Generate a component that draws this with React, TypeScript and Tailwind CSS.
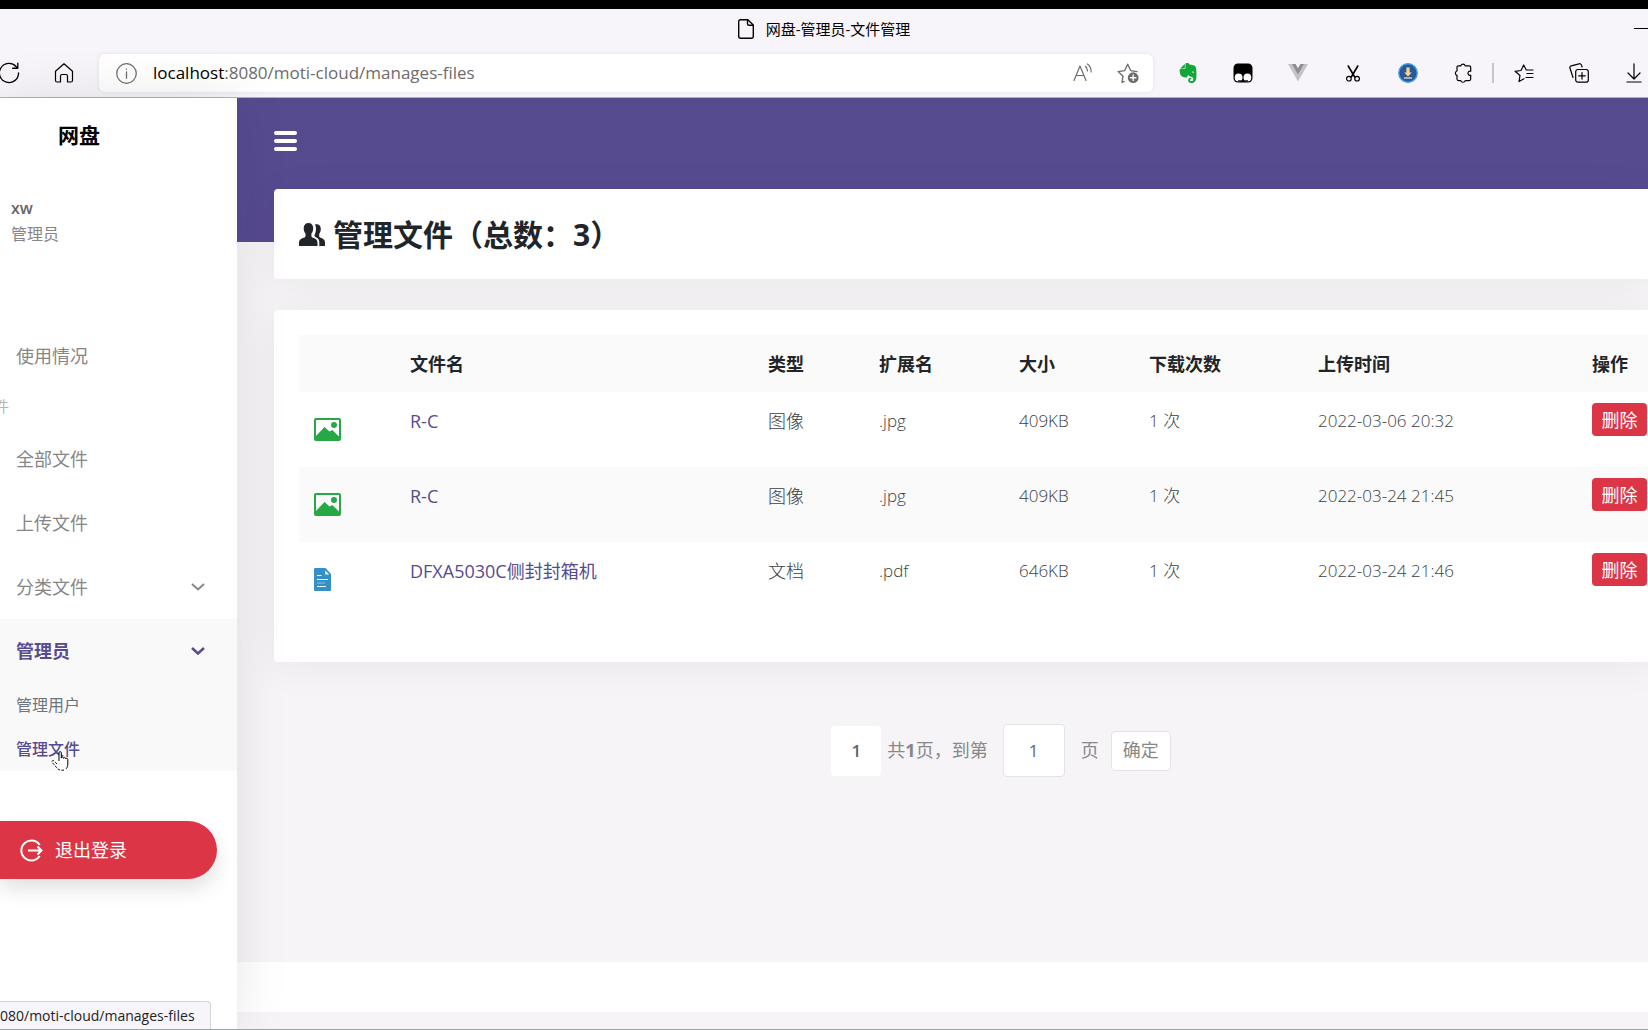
import { memo, useState, type ReactNode } from 'react';
import { SiEvernote } from 'react-icons/si';

type FileKind = 'image' | 'document';

interface CloudFile {
  readonly id: number;
  readonly kind: FileKind;
  readonly name: string;
  readonly type: string;
  readonly extension: string;
  readonly size: string;
  readonly downloads: number;
  readonly uploadedAt: string;
}

const FILES: readonly CloudFile[] = [
  { id: 1, kind: 'image', name: 'R-C', type: '图像', extension: '.jpg', size: '409KB', downloads: 1, uploadedAt: '2022-03-06 20:32' },
  { id: 2, kind: 'image', name: 'R-C', type: '图像', extension: '.jpg', size: '409KB', downloads: 1, uploadedAt: '2022-03-24 21:45' },
  { id: 3, kind: 'document', name: 'DFXA5030C侧封封箱机', type: '文档', extension: '.pdf', size: '646KB', downloads: 1, uploadedAt: '2022-03-24 21:46' },
];

interface IconProps {
  readonly children: ReactNode;
  readonly className?: string;
}

/** Thin outlined icon used across the browser toolbar. */
const LineIcon = ({ children, className = 'size-5' }: IconProps) => (
  <svg
    viewBox="0 0 20 20"
    fill="none"
    stroke="currentColor"
    strokeWidth="1.2"
    strokeLinecap="round"
    strokeLinejoin="round"
    className={className}
    aria-hidden="true"
  >
    {children}
  </svg>
);

const TampermonkeyIcon = () => (
  <svg viewBox="0 0 20 20" className="size-5" aria-hidden="true">
    <rect x="0.5" y="0.5" width="19" height="19" rx="4.5" fill="#000" />
    <circle cx="5.6" cy="14.4" r="3.9" fill="#fff" />
    <circle cx="14.4" cy="14.4" r="3.9" fill="#fff" />
    <path d="M5 17.8h3.4M11.6 17.8H15" stroke="#000" strokeWidth="1" />
  </svg>
);

const VueIcon = () => (
  <svg viewBox="0 0 20 20" className="size-5" aria-hidden="true">
    <path d="M0 1h4.5L10 10.6 15.5 1H20L10 18.6z" fill="#c4c2c6" />
    <path d="M4 1h3.6L10 5.2 12.4 1H16L10 11.4z" fill="#8f8d92" />
  </svg>
);

const DownloaderIcon = () => (
  <svg viewBox="0 0 20 20" className="size-5" aria-hidden="true">
    <circle cx="10" cy="10" r="9.2" fill="#2b5797" stroke="#3c9be0" strokeWidth="1.4" />
    <path d="M8.4 4.5h3.2v5h2.2L10 13.4 6.2 9.5h2.2z" fill="#f6d58a" />
    <path d="M6 15h8" stroke="#cfc9b8" strokeWidth="1.5" />
  </svg>
);

const PeopleIcon = () => (
  <svg viewBox="0 0 26 23" fill="currentColor" className="h-[23px] w-[26px]" aria-hidden="true">
    <path d="M9.5 0c2.900 0 4.700 2 4.700 5 0 2.300-.6 4.300-1.800 5.600v2.200c0 1.100.5 1.500 1.700 2 2.700 1 4.400 1.900 4.400 4.600V23H0v-3.600c0-2.700 1.900-3.600 4.600-4.600 1.400-.5 1.900-.9 1.900-2v-2.200C5.300 9.300 4.700 7.300 4.700 5c0-3 1.900-5 4.800-5z" />
    <path d="M16 1.500c.5-.2 1-.3 1.600-.3 2.600 0 4.200 1.800 4.200 4.600 0 2.200-.5 3.900-1.600 5.100v2c0 1 .4 1.300 1.500 1.800 2.600 1 4.300 2 4.300 4.700V23h-5.700v-3.600c0-2.800-1.300-4.200-3.800-5.400-.8-.4-1-.8-1-1.500 0-.8.3-1.200.7-2C17.300 7 17.400 4 16 1.500z" />
  </svg>
);

const ChevronIcon = ({ className }: { readonly className: string }) => (
  <svg viewBox="0 0 14 8" fill="none" stroke="currentColor" className={className} aria-hidden="true">
    <path d="M1 1l6 5.500L13 1" />
  </svg>
);

const FileIcon = ({ kind }: { readonly kind: FileKind }) => {
  if (kind === 'image') {
    return (
      <svg viewBox="0 0 27 23" className="h-[23px] w-[27px] text-[#28a745]" aria-hidden="true">
        <rect x="1" y="1" width="25" height="21" rx="1" fill="none" stroke="currentColor" strokeWidth="2" />
        <path d="M1.500 18.500L10.500 9l5 4.600 2.800-1.600 7.200 7V22h-24z" fill="currentColor" />
        <circle cx="20" cy="7" r="3" fill="currentColor" />
      </svg>
    );
  }
  return (
    <svg viewBox="0 0 17 23" className="h-[23px] w-[17px]" aria-hidden="true">
      <path d="M1 0h10.500L17 6v16a1 1 0 0 1-1 1H1a1 1 0 0 1-1-1V1a1 1 0 0 1 1-1z" fill="#3490c8" />
      <path d="M11.200 2.500v4h4z" fill="#fff" />
      <path d="M3 7.500h4.500M3 11.500h11M3 18.500h9" stroke="#fff" strokeWidth="1.200" />
      <path d="M3 15h8" stroke="#7dbbe0" strokeWidth="1.200" />
    </svg>
  );
};

interface ToolbarButtonProps {
  readonly label: string;
  readonly children: ReactNode;
}

const ToolbarButton = ({ label, children }: ToolbarButtonProps) => (
  <button type="button" aria-label={label} className="flex h-10 w-[55px] shrink-0 items-center justify-center">
    {children}
  </button>
);

const BrowserChrome = () => (
  <header className="border-b border-[#b3b0b8] bg-[#f7f5f9] text-black">
    <div className="h-[9px] bg-black" />
    <div className="relative flex h-10 items-center justify-center">
      <div className="flex items-center gap-3 text-[15px]">
        <svg viewBox="0 0 16 20" fill="none" stroke="currentColor" strokeWidth="1.400" strokeLinejoin="round" className="h-5 w-4" aria-hidden="true">
          <path d="M2.500.7h7.300L15.300 6v11.500a1.800 1.800 0 0 1-1.800 1.800h-11A1.800 1.800 0 0 1 .7 17.500v-15A1.800 1.800 0 0 1 2.500.7z" />
          <path d="M9.500 1v3.700c0 1 .7 1.600 1.600 1.600H15" />
        </svg>
        <span>网盘-管理员-文件管理</span>
      </div>
      <button type="button" aria-label="最小化" className="absolute top-[19px] right-0 h-px w-[14px] bg-black" />
    </div>
    <div className="flex h-12 items-center overflow-hidden">
      <button type="button" aria-label="刷新" className="-ml-[2px] flex h-10 w-[22px] shrink-0 items-center justify-center">
        <LineIcon className="size-[22px]">
          <path d="M18.700 10a8.700 8.700 0 1 1-2.300-5.900l1.300 1.500M18 1v4.700h-4.700" />
        </LineIcon>
      </button>
      <button type="button" aria-label="主页" className="ml-[33px] flex h-10 w-[22px] shrink-0 items-center justify-center">
        <LineIcon>
          <path d="M1.500 8.200L10 .8l8.500 7.400v9.300a1.500 1.500 0 0 1-1.500 1.500h-3.500v-6a1.500 1.500 0 0 0-1.500-1.500H8A1.500 1.500 0 0 0 6.500 13v6H3a1.500 1.500 0 0 1-1.500-1.500z" />
        </LineIcon>
      </button>
      <div className="ml-6 flex h-[38px] min-w-0 flex-1 items-center rounded-md bg-white pr-4 pl-[17px] text-[#6c6c6c] shadow-[0_0_4px_rgba(0,0,0,0.08)]">
        <LineIcon className="size-[21px] shrink-0">
          <circle cx="10" cy="10" r="9.300" />
          <path d="M10 8.500v6M10 5.700v.2" />
        </LineIcon>
        <p className="ml-4 flex-1 truncate text-[17px]">
          <span className="text-black">localhost</span>:8080/moti-cloud/manages-files
        </p>
        <button type="button" aria-label="大声朗读" className="flex size-5 items-center justify-center">
          <LineIcon>
            <path d="M1 17.500L7 3l6 14.500M3.100 12.500h7.800M12.500 3.500c1.300 1.200 2 2.700 2 4.500M14.500 1c2.500 2 3.700 4.500 3.700 8" />
          </LineIcon>
        </button>
        <button type="button" aria-label="添加到收藏夹" className="-mr-[2px] ml-6 flex size-[22px] items-center justify-center">
          <LineIcon className="size-[22px]">
            <path d="M6.500 17.800l-2 .7 1-5.600L1 8.700l6-.9L9.700 2l2.700 5.800 5.800.9" />
            <circle cx="14.700" cy="14.300" r="4.900" fill="currentColor" stroke="none" />
            <path d="M14.700 11.800v5M12.200 14.300h5" stroke="#fff" />
          </LineIcon>
        </button>
      </div>
      <div className="-mr-[13px] ml-[7px] flex shrink-0 items-center">
        <ToolbarButton label="印象笔记"><SiEvernote className="size-5 text-[#11a637]" /></ToolbarButton>
        <ToolbarButton label="Tampermonkey"><TampermonkeyIcon /></ToolbarButton>
        <ToolbarButton label="Vue"><VueIcon /></ToolbarButton>
        <ToolbarButton label="网页捕获">
          <LineIcon>
            <path d="M5.200 3l6.500 11M14.800 3L8.300 14" strokeWidth="1.600" />
            <circle cx="5.900" cy="15.700" r="2.300" />
            <circle cx="14.100" cy="15.700" r="2.300" />
          </LineIcon>
        </ToolbarButton>
        <ToolbarButton label="下载器"><DownloaderIcon /></ToolbarButton>
        <ToolbarButton label="扩展">
          <LineIcon>
            <path d="M5.500 2.800h2.300a2.300 2.300 0 0 1 4.400 0h4a1.500 1.500 0 0 1 1.500 1.500v3.900a2.100 2.100 0 1 0 0 4v3.900a1.500 1.500 0 0 1-1.500 1.500h-4a2.300 2.300 0 0 1-4.400 0H5.500A1.500 1.500 0 0 1 4 16.100v-3.700a2.300 2.300 0 0 1 0-4.400V4.300a1.500 1.500 0 0 1 1.500-1.500z" />
          </LineIcon>
        </ToolbarButton>
        <div className="mx-[2px] h-5 w-[2px] bg-[#c6c4c9]" />
        <ToolbarButton label="收藏夹">
          <LineIcon>
            <path d="M10 15.800l-5 2.700 1-6L1 8.300l6-.8L9.700 2l2.600 5h6.700M13 10.500h6M12 14.500h7" />
          </LineIcon>
        </ToolbarButton>
        <ToolbarButton label="集锦">
          <LineIcon>
            <rect x="6.700" y="6.500" width="12.600" height="12.600" rx="2.200" />
            <path d="M13 9.500v6.600M9.700 12.800h6.600M4 14.500L1 5.300a2 2 0 0 1 1.300-2.500L10 .8a2 2 0 0 1 2.500 1.400l.6 1.800" />
          </LineIcon>
        </ToolbarButton>
        <ToolbarButton label="下载">
          <LineIcon>
            <path d="M10 .8v15M4 10l6 6 6-6M3 19h14" />
          </LineIcon>
        </ToolbarButton>
      </div>
    </div>
  </header>
);

interface MenuLinkProps {
  readonly label: string;
  readonly hasChildren?: boolean;
}

const MenuLink = ({ label, hasChildren = false }: MenuLinkProps) => (
  <a href="#" className="flex h-16 items-center justify-between pr-8 pl-4 text-[18px]">
    {label}
    {hasChildren && <ChevronIcon className="h-2 w-[14px] stroke-2" />}
  </a>
);

const Sidebar = () => (
  <aside className="relative z-10 flex w-[237px] shrink-0 flex-col bg-white text-[#868686] shadow-[0_0_50px_rgba(0,0,0,0.1)]">
    <a href="#" className="pt-[23px] pl-[58px] text-[21px] leading-7 font-bold text-black">网盘</a>
    <div className="mt-[46px] pl-[11px]">
      <p className="text-[16px] leading-[26px] font-semibold text-[#666]">xw</p>
      <p className="text-[16px] leading-[26px]">管理员</p>
    </div>
    <nav className="mt-[77px]">
      <MenuLink label="使用情况" />
      <p className="-ml-1.5 h-[39px] pt-1.5 text-[15px] leading-6 text-[#b5b5b5]">件</p>
      <MenuLink label="全部文件" />
      <MenuLink label="上传文件" />
      <MenuLink label="分类文件" hasChildren />
      <div className="h-[152px] bg-[#f9f9fa] text-[#574b90]">
        <a href="#" className="flex h-16 items-center justify-between pr-8 pl-4 text-[18px] font-bold">
          管理员
          <ChevronIcon className="h-2 w-[14px] stroke-[2.5]" />
        </a>
        <a href="#" className="flex h-11 items-center pl-4 text-[16px] text-[#6c757d]">管理用户</a>
        <a href="#" className="relative flex h-11 items-center pl-4 text-[16px] font-medium">
          管理文件
          <svg viewBox="0 0 18 20" fill="none" stroke="#000" strokeWidth="1" className="absolute top-6 left-[51px] h-5 w-[18px]" aria-hidden="true">
            <path
              d="M8 10V1.800C8 .2 10.300.2 10.300 1.800V7c0-1.200 2.300-1.200 2.300.3 0-1 2.200-1 2.200.5 0-1 2-.8 2 .8V13c0 4-2.300 6.300-5.800 6.300-3 0-4.500-1.600-6-4.300L1 11.300C.3 10 2 9 3.200 10.200L6 13z"
              fill="#fff"
              stroke="none"
            />
            <path d="M8 10V1.800C8 .2 10.300.2 10.300 1.800V7c0-1.200 2.300-1.200 2.300.3 0-1 2.200-1 2.200.5 0-1 2-.8 2 .8V13c0 2-.6 3.700-1.700 4.800" />
            <path d="M13 19c-3 .7-5.500 0-7-2L1 11.300C.3 10 2 9 3.200 10.200L6 13" strokeDasharray="2.500 1.500" />
          </svg>
        </a>
      </div>
    </nav>
    <button
      type="button"
      className="mt-[50px] mr-5 flex h-[58px] shrink-0 items-center gap-3 rounded-r-full bg-[#dc3545] pl-5 text-[18px] text-white shadow-[0_10px_20px_rgba(0,0,0,0.12)]"
    >
      <svg viewBox="0 0 23 23" fill="none" stroke="currentColor" strokeWidth="2" className="size-[23px]" aria-hidden="true">
        <path d="M19.700 6A10 10 0 1 0 19.700 17M8 11.500h13M17.500 7.500l4 4-4 4" />
      </svg>
      退出登录
    </button>
  </aside>
);

const FileRow = memo(({ file }: { readonly file: CloudFile }) => (
  <tr className="h-[75px] align-top even:bg-[#fafafa]">
    <td className="pt-[26px] pl-[15px]"><FileIcon kind={file.kind} /></td>
    <td className="pt-[17px] pl-[15px] text-[18px] font-normal text-[#574b90]"><a href="#">{file.name}</a></td>
    <td className="pt-[17px] pl-[15px] text-[18px]">{file.type}</td>
    <td className="pt-[17px] pl-[15px]">{file.extension}</td>
    <td className="pt-[17px] pl-[15px]">{file.size}</td>
    <td className="pt-[17px] pl-[15px]">{file.downloads} 次</td>
    <td className="pt-[17px] pl-[15px]">{file.uploadedAt}</td>
    <td className="pt-[11px] pl-[15px]">
      <button type="button" className="flex h-[33px] w-[55px] items-center justify-center rounded bg-[#dc3545] text-[18px] font-normal text-white">
        删除
      </button>
    </td>
  </tr>
));

const FileTable = () => (
  <table className="w-full table-fixed text-left text-[17px] leading-6 font-light text-[#3c4043]">
    <colgroup>
      <col className="w-[96px]" />
      <col />
      <col className="w-[111px]" />
      <col className="w-[140px]" />
      <col className="w-[130px]" />
      <col className="w-[169px]" />
      <col className="w-[274px]" />
      <col className="w-[71px]" />
    </colgroup>
    <thead className="bg-[#fafafa] text-[18px] text-[#212529]">
      <tr className="h-[57px]">
        <td />
        <th className="pl-[15px] font-bold">文件名</th>
        <th className="pl-[15px] font-bold">类型</th>
        <th className="pl-[15px] font-bold">扩展名</th>
        <th className="pl-[15px] font-bold">大小</th>
        <th className="pl-[15px] font-bold">下载次数</th>
        <th className="pl-[15px] font-bold">上传时间</th>
        <th className="pl-[15px] font-bold">操作</th>
      </tr>
    </thead>
    <tbody>
      {FILES.map(file => <FileRow key={file.id} file={file} />)}
    </tbody>
  </table>
);

const Pagination = () => {
  const [page, setPage] = useState('1');

  return (
    <div className="mt-[62px] flex items-center justify-center pl-20 text-[18px] text-[#888]">
      <button type="button" className="size-[50px] rounded-sm bg-white text-[17px] font-semibold text-[#666]">1</button>
      <label htmlFor="page" className="ml-[6px]">共<b>1</b>页，到第</label>
      <input
        id="page"
        value={page}
        onChange={event => setPage(event.target.value)}
        className="mr-4 ml-[15px] h-[53px] w-[62px] rounded border border-[#e3e3e8] bg-white text-center text-[17px] text-[#666]"
      />
      <span>页</span>
      <button type="button" className="ml-3 h-10 w-[60px] rounded border border-[#e3e3e8] bg-white">确定</button>
    </div>
  );
};

const App = () => (
  <div className="relative flex h-screen flex-col overflow-hidden border-b border-[#9aa5a8] bg-[#f6f4f7] font-['Open_Sans','Noto_Sans_CJK_SC',sans-serif]">
    <BrowserChrome />
    <div className="flex min-h-0 flex-1">
      <Sidebar />
      <main className="flex min-w-0 flex-1 flex-col">
        <div className="h-[144px] shrink-0 bg-[#574b90] pt-[33px] pl-[37px]">
          <button type="button" aria-label="菜单" className="flex w-[23px] flex-col gap-1">
            <span className="h-1 w-full rounded-full bg-white" />
            <span className="h-1 w-full rounded-full bg-white" />
            <span className="h-1 w-full rounded-full bg-white" />
          </button>
        </div>
        <div className="-mt-[53px] pl-[37px]">
          <section className="flex h-[90px] items-center gap-2 rounded-l bg-white pl-[25px] text-[#212529] shadow-[0_5px_40px_rgba(0,0,0,0.06)]">
            <PeopleIcon />
            <h1 className="text-[30px] font-bold">管理文件（总数：3）</h1>
          </section>
          <section className="mt-[31px] rounded-l bg-white pt-[25px] pb-[45px] pl-[25px] shadow-[0_5px_40px_rgba(0,0,0,0.06)]">
            <FileTable />
          </section>
          <Pagination />
        </div>
        <footer className="mt-auto mb-[17px] h-[50px] bg-white" />
      </main>
    </div>
    <div className="absolute bottom-0 left-0 z-20 h-7 w-[211px] overflow-hidden rounded-tr border-t border-r border-[#d5d3d8] bg-[#f7f5f9] text-[14px] leading-7 whitespace-nowrap text-[#222]">
      080/moti-cloud/manages-files
    </div>
  </div>
);

export default App;
